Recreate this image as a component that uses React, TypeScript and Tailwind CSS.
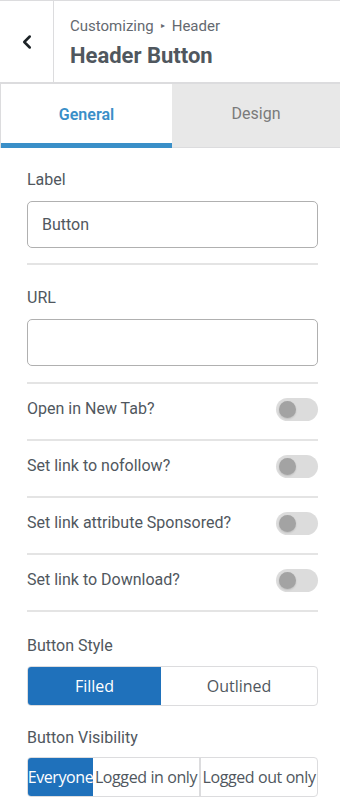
import { ChevronLeft } from "lucide-react";

const toggles = [
  "Open in New Tab?",
  "Set link to nofollow?",
  "Set link attribute Sponsored?",
  "Set link to Download?",
];

function Toggle() {
  return (
    <div className="w-[42px] h-[23px] rounded-full bg-[#dcdcdc] flex items-center px-[3px]">
      <div className="size-[17px] rounded-full bg-[#a3a3a3] shadow-[0_1px_2px_rgba(0,0,0,0.15)]" />
    </div>
  );
}

export default function App() {
  return (
    <div className="w-[340px] h-[806px] bg-white font-['Roboto',sans-serif] text-[#50575e] overflow-hidden border-t border-[#dcdcde]">
      <div className="flex h-[83px] border-b-2 border-[#dcdcde]">
        <div className="w-[54px] border-r border-[#dcdcde] flex items-center justify-center">
          <ChevronLeft className="size-[22px] text-[#1d2327]" strokeWidth={2.75} />
        </div>
        <div className="flex-1 pl-[16px] pt-[15px]">
          <div className="text-[15px] leading-[20px] text-[#646970] flex items-center gap-[7px]">
            Customizing <span className="text-[8px]">▸</span> Header
          </div>
          <div className="text-[22px] leading-[28px] font-bold text-[#50575e] mt-[6px]">Header Button</div>
        </div>
      </div>

      <div className="flex h-[64px] border-l border-[#dcdcde]">
        <div className="w-[171px] flex flex-col bg-white">
          <div className="flex-1 flex items-center justify-center pt-[2px] text-[16px] font-semibold text-[#3a8fc8]">General</div>
          <div className="h-[5px] bg-[#3a8fc8]" />
        </div>
        <div className="flex-1 bg-[#e8e8e8] flex items-center justify-center pb-[3px] text-[16px] text-[#7a7a7a] border-b border-[#dcdcde]">
          Design
        </div>
      </div>

      <div className="pl-[27px] pr-[22px] pt-[21px] text-[16px]">
        <div className="pb-[15px] border-b-2 border-[#e4e4e4]">
          <div className="leading-[22px] mb-[10px]">Label</div>
          <div className="h-[47px] rounded-[5px] border border-[#b0b0b0] flex items-center px-[14px] text-[#50575e]">Button</div>
        </div>
        <div className="pt-[22px] pb-[16px] border-b-2 border-[#e4e4e4]">
          <div className="leading-[22px] mb-[10px]">URL</div>
          <div className="h-[47px] rounded-[5px] border border-[#b0b0b0]" />
        </div>
        {toggles.map((t) => (
          <div key={t} className="h-[57px] flex items-center justify-between border-b-2 border-[#e4e4e4] pb-[5px]">
            <span>{t}</span>
            <Toggle />
          </div>
        ))}

        <div className="pt-[23px]">
          <div className="leading-[22px] mb-[9px]">Button Style</div>
          <div className="flex h-[40px] rounded-[4px] border border-[#dcdcde] overflow-hidden font-['Open_Sans',sans-serif] text-[16px]">
            <div className="w-[133px] bg-[#1f71bb] text-white flex items-center justify-center">Filled</div>
            <div className="flex-1 flex items-center justify-center text-[#50575e]">Outlined</div>
          </div>
        </div>

        <div className="pt-[21px]">
          <div className="leading-[22px] mb-[8px]">Button Visibility</div>
          <div className="flex h-[40px] rounded-[4px] border border-[#dcdcde] overflow-hidden font-['Open_Sans',sans-serif] text-[16px] tracking-[-0.4px] whitespace-nowrap">
            <div className="w-[65px] bg-[#1f71bb] text-white flex items-center justify-center overflow-hidden">Everyone</div>
            <div className="w-[108px] border-r-2 border-[#dcdcde] flex items-center justify-center overflow-hidden">Logged in only</div>
            <div className="flex-1 flex items-center justify-center overflow-hidden">Logged out only</div>
          </div>
        </div>
      </div>
    </div>
  );
}
